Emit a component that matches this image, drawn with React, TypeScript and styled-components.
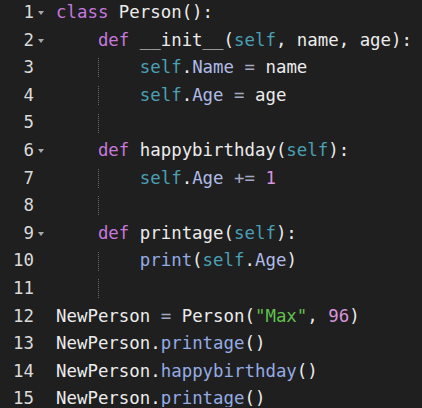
import React from "react";
import styled, { createGlobalStyle } from "styled-components";

const Global = createGlobalStyle`
  html, body {
    margin: 0;
    padding: 0;
    background: #1f1f1f;
  }
`;

type Kind = "kw" | "self" | "txt" | "op" | "prop" | "fn" | "str" | "num" | "punct";

const colors: Record<Kind, string> = {
  kw: "#c678dd",
  self: "#4aa0b5",
  txt: "#ececec",
  op: "#a3a9c2",
  prop: "#aebbe6",
  fn: "#94abe4",
  str: "#62c04e",
  num: "#d993dc",
  punct: "#ececec",
};

const Editor = styled.div`
  width: 422px;
  height: 408px;
  overflow: hidden;
  background: #1f1f1f;
  font-family: "DejaVu Sans Mono", "Liberation Mono", monospace;
  font-size: 17.4px;
  line-height: 27.6px;
  display: flex;
  flex-direction: column;
  margin-top: -1px;
`;

const Row = styled.div`
  display: grid;
  grid-template-columns: 34px 22px 1fr;
  height: 27.6px;
  align-items: center;
`;

const LineNo = styled.span`
  text-align: right;
  color: #dadada;
`;

const FoldCell = styled.span`
  display: flex;
  align-items: center;
  padding-left: 4px;
  height: 100%;
`;

const FoldArrow = styled.span`
  width: 0;
  height: 0;
  border-left: 3.5px solid transparent;
  border-right: 3.5px solid transparent;
  border-top: 4px solid #a8a8a8;
  margin-top: 1px;
`;

const Code = styled.span`
  white-space: pre;
  display: flex;
  align-items: center;
  height: 100%;
`;

const Indent = styled.span<{ $cols: number }>`
  display: inline-block;
  width: ${(p) => p.$cols * 10.47}px;
  height: 100%;
`;

const Guide = styled.span`
  display: inline-block;
  width: 41.88px;
  height: 19px;
  box-sizing: border-box;
  border-left: 1px dotted #6a6a6a;
`;

const Tok = styled.span<{ $k: Kind }>`
  color: ${(p) => colors[p.$k]};
`;

type T = [Kind, string];
type Line = { fold?: boolean; indent: number; guide?: boolean; toks: T[] };

const lines: Line[] = [
  { fold: true, indent: 0, toks: [["kw", "class"], ["txt", " Person():"]] },
  {
    fold: true,
    indent: 4,
    toks: [["kw", "def"], ["txt", " __init__("], ["self", "self"], ["txt", ", name, age):"]],
  },
  { indent: 4, guide: true, toks: [["self", "self"], ["punct", "."], ["prop", "Name"], ["op", " = "], ["txt", "name"]] },
  { indent: 4, guide: true, toks: [["self", "self"], ["punct", "."], ["prop", "Age"], ["op", " = "], ["txt", "age"]] },
  { indent: 4, guide: true, toks: [] },
  {
    fold: true,
    indent: 4,
    toks: [["kw", "def"], ["txt", " happybirthday("], ["self", "self"], ["txt", "):"]],
  },
  { indent: 4, guide: true, toks: [["self", "self"], ["punct", "."], ["prop", "Age"], ["op", " += "], ["num", "1"]] },
  { indent: 4, guide: true, toks: [] },
  {
    fold: true,
    indent: 4,
    toks: [["kw", "def"], ["txt", " printage("], ["self", "self"], ["txt", "):"]],
  },
  { indent: 4, guide: true, toks: [["fn", "print"], ["txt", "("], ["self", "self"], ["punct", "."], ["prop", "Age"], ["txt", ")"]] },
  { indent: 4, guide: true, toks: [] },
  {
    indent: 0,
    toks: [["txt", "NewPerson"], ["op", " = "], ["txt", "Person("], ["str", '"Max"'], ["txt", ", "], ["num", "96"], ["txt", ")"]],
  },
  { indent: 0, toks: [["txt", "NewPerson"], ["punct", "."], ["fn", "printage"], ["txt", "()"]] },
  { indent: 0, toks: [["txt", "NewPerson"], ["punct", "."], ["fn", "happybirthday"], ["txt", "()"]] },
  { indent: 0, toks: [["txt", "NewPerson"], ["punct", "."], ["fn", "printage"], ["txt", "()"]] },
];

export default function App() {
  return (
    <>
      <Global />
      <Editor>
        {lines.map((l, i) => (
          <Row key={i}>
            <LineNo>{i + 1}</LineNo>
            <FoldCell>{l.fold && <FoldArrow />}</FoldCell>
            <Code>
              {l.indent > 0 && <Indent $cols={l.indent} />}
              {l.guide && <Guide />}
              {l.toks.map(([k, s], j) => (
                <Tok key={j} $k={k}>
                  {s}
                </Tok>
              ))}
            </Code>
          </Row>
        ))}
      </Editor>
    </>
  );
}
